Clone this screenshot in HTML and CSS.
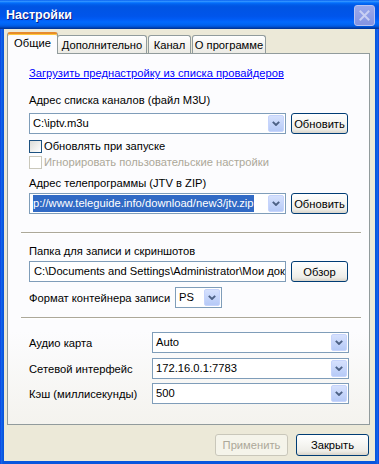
FILE: index.html
```html
<!DOCTYPE html>
<html lang="ru">
<head>
<meta charset="utf-8">
<title>Настройки</title>
<link rel="stylesheet" href="styles.css">
</head>
<body>
<div class="window">
  <div class="titlebar">
    <span class="title">Настройки</span>
    <span class="close"><svg width="11" height="11" viewBox="0 0 11 11"><path d="M1.5 1.5L9.5 9.5M9.5 1.5L1.5 9.5" stroke="#C8CFF3" stroke-width="2" stroke-linecap="square"/></svg></span>
  </div>
  <div class="client">
    <div class="tabs">
      <div class="tab active">Общие</div>
      <div class="tab t-dop">Дополнительно</div>
      <div class="tab t-kanal">Канал</div>
      <div class="tab t-about">О программе</div>
    </div>
    <div class="panel">
      <a class="link">Загрузить преднастройку из списка провайдеров</a>
      <div class="label l1">Адрес списка каналов (файл M3U)</div>
      <div class="row r1">
        <div class="combo wide"><span class="val">C:\iptv.m3u</span><span class="drop"><svg width="8" height="5" viewBox="0 0 8 5"><path d="M0.8 0.8L4 4L7.2 0.8" fill="none" stroke="#4D6185" stroke-width="1.9"/></svg></span></div>
        <div class="btn side">Обновить</div>
      </div>
      <div class="check c1"><span class="box"></span>Обновлять при запуске</div>
      <div class="check c2 disabled"><span class="box"></span>Игнорировать пользовательские настройки</div>
      <div class="label l2">Адрес телепрограммы (JTV в ZIP)</div>
      <div class="row r2">
        <div class="combo wide"><span class="val tall"><span class="sel">p://www.teleguide.info/download/new3/jtv.zip</span></span><span class="drop"><svg width="8" height="5" viewBox="0 0 8 5"><path d="M0.8 0.8L4 4L7.2 0.8" fill="none" stroke="#4D6185" stroke-width="1.9"/></svg></span></div>
        <div class="btn side">Обновить</div>
      </div>
      <div class="sep s1"></div>
      <div class="label l3">Папка для записи и скриншотов</div>
      <div class="row r3">
        <div class="field wide">C:\Documents and Settings\Administrator\Мои док</div>
        <div class="btn side">Обзор</div>
      </div>
      <div class="row r4">
        <span class="flabel">Формат контейнера записи</span>
        <div class="combo small"><span class="val">PS</span><span class="drop"><svg width="8" height="5" viewBox="0 0 8 5"><path d="M0.8 0.8L4 4L7.2 0.8" fill="none" stroke="#4D6185" stroke-width="1.9"/></svg></span></div>
      </div>
      <div class="sep s2"></div>
      <div class="row r5">
        <span class="rlabel">Аудио карта</span>
        <div class="combo long"><span class="val">Auto</span><span class="drop"><svg width="8" height="5" viewBox="0 0 8 5"><path d="M0.8 0.8L4 4L7.2 0.8" fill="none" stroke="#4D6185" stroke-width="1.9"/></svg></span></div>
      </div>
      <div class="row r6">
        <span class="rlabel">Сетевой интерфейс</span>
        <div class="combo long"><span class="val">172.16.0.1:7783</span><span class="drop"><svg width="8" height="5" viewBox="0 0 8 5"><path d="M0.8 0.8L4 4L7.2 0.8" fill="none" stroke="#4D6185" stroke-width="1.9"/></svg></span></div>
      </div>
      <div class="row r7">
        <span class="rlabel">Кэш (миллисекунды)</span>
        <div class="combo long"><span class="val">500</span><span class="drop"><svg width="8" height="5" viewBox="0 0 8 5"><path d="M0.8 0.8L4 4L7.2 0.8" fill="none" stroke="#4D6185" stroke-width="1.9"/></svg></span></div>
      </div>
    </div>
    <div class="footer">
      <div class="btn foot disabled">Применить</div>
      <div class="btn foot">Закрыть</div>
    </div>
  </div>
</div>
</body>
</html>
```

FILE: styles.css
```css
body {
  margin: 0;
  width: 379px;
  height: 464px;
  overflow: hidden;
  font-family: "Liberation Sans", Arial, sans-serif;
  font-size: 11.2px;
  color: #000;
}

.window {
  width: 379px;
  height: 464px;
  display: flex;
  flex-direction: column;
  background: linear-gradient(90deg, #0831D9 0, #166AEE 1px, #0855DD 3px, #0855DD 376px, #166AEE 378px, #0831D9 379px);
}

.titlebar {
  height: 29px;
  flex: none;
  display: flex;
  align-items: center;
  justify-content: space-between;
  padding: 0 4px 0 6px;
  background: linear-gradient(#0058EE 0%, #3593FF 4%, #288EFF 6%, #127DFF 8%, #036FFC 10%, #0262EE 14%, #0057E5 20%, #0054E3 24%, #0055EB 56%, #005BF5 66%, #026AFE 76%, #0062EF 86%, #0052D6 92%, #0040AB 96%, #003092 100%);
}

.title {
  color: #fff;
  font-weight: bold;
  font-size: 12.5px;
  text-shadow: 1px 1px #0A1883;
}

.close {
  width: 21px;
  height: 21px;
  margin-top: 2px;
  box-sizing: border-box;
  border: 1px solid #B9C3F1;
  border-radius: 3px;
  background: linear-gradient(#9AA8EB, #8494E2);
  display: flex;
  align-items: center;
  justify-content: center;
}

.client {
  flex: 1;
  margin: 0 4px 3px;
  background: #ECE9D8;
  display: flex;
  flex-direction: column;
}

.tabs {
  height: 24px;
  flex: none;
  display: flex;
  align-items: flex-end;
  padding-left: 3px;
}

.tab {
  box-sizing: border-box;
  height: 18px;
  border: 1px solid #919B9C;
  border-bottom: none;
  border-radius: 3px 3px 0 0;
  background: linear-gradient(#FFFFFF, #F6F5F1 45%, #ECEBE5);
  display: flex;
  align-items: center;
  justify-content: center;
}

.tab.active {
  width: 51px;
  height: 22px;
  margin-bottom: -1px;
  border-top: 2px solid #E68B2C;
  box-shadow: inset 0 1px 0 #FFC73C;
  background: #FCFCFE;
  padding-bottom: 2px;
  position: relative;
  z-index: 1;
}

.t-dop { width: 90px; margin-left: -1px; }
.t-kanal { width: 43px; margin-left: 1px; }
.t-about { width: 74px; margin-left: 1px; }

.panel {
  flex: none;
  box-sizing: border-box;
  width: 363px;
  height: 372px;
  margin-left: 3px;
  border: 1px solid #919B9C;
  background: linear-gradient(#FCFCFE 0%, #FCFCFE 75%, #F4F3EE 100%);
  padding: 0 8px 0 21px;
  display: flex;
  flex-direction: column;
}

.link {
  margin-top: 13px;
  line-height: 13px;
  color: #0000FF;
  text-decoration: underline;
}

.label { line-height: 13px; }
.l1 { margin-top: 14px; }
.l2 { margin-top: 8px; }
.l3 { margin-top: 11px; }

.row {
  display: flex;
  align-items: center;
  height: 21px;
  flex: none;
}

.r1 { margin-top: 6px; }
.r2 { margin-top: 3px; }
.r3 { margin-top: 3px; }
.r4 { margin-top: 5px; }
.r5 { margin-top: 13px; }
.r6 { margin-top: 5px; }
.r7 { margin-top: 4px; }

.check {
  display: flex;
  align-items: center;
  height: 13px;
  line-height: 13px;
}

.c1 { margin-top: 6px; }
.c2 { margin-top: 3px; }

.box {
  width: 13px;
  height: 13px;
  box-sizing: border-box;
  border: 1px solid #1C5180;
  background: linear-gradient(135deg, #DCDCD7, #FFFFFF);
  margin-right: 2px;
  flex: none;
}

.check.disabled { color: #ACA899; }
.check.disabled .box {
  border-color: #CAC8BB;
  background: #FFFFFF;
}

.sep {
  height: 0;
  border-top: 1px solid #ACA899;
  border-bottom: 1px solid #FFFFFF;
  margin-left: -8px;
  flex: none;
}

.s1 { margin-top: 18px; }
.s2 { margin-top: 9px; }

.combo {
  box-sizing: border-box;
  height: 21px;
  border: 1px solid #7F9DB9;
  background: #FFFFFF;
  display: flex;
  align-items: center;
  padding: 1px;
}

.combo.wide, .field.wide { width: 257px; }
.combo.small { width: 47px; }
.combo.long { width: 197px; }

.val {
  flex: 1;
  min-width: 0;
  padding-left: 2px;
  white-space: nowrap;
  overflow: hidden;
  line-height: 13px;
}

.val.tall { line-height: 17px; height: 17px; }

.sel {
  background: #316AC5;
  color: #FFFFFF;
  display: inline-block;
  height: 17px;
}

.drop {
  flex: none;
  width: 16px;
  height: 17px;
  box-sizing: border-box;
  border: 1px solid #C6D4FC;
  border-radius: 2px;
  background: linear-gradient(#D6E1FD, #B6CAF7);
  display: flex;
  align-items: center;
  justify-content: center;
}

.field {
  box-sizing: border-box;
  height: 21px;
  border: 1px solid #7F9DB9;
  background: #FFFFFF;
  padding-left: 4px;
  line-height: 19px;
  white-space: nowrap;
  overflow: hidden;
}

.flabel { width: 146px; flex: none; }
.rlabel { width: 123px; flex: none; }

.btn {
  box-sizing: border-box;
  border: 1px solid #003C74;
  border-radius: 3px;
  background: linear-gradient(#FFFFFF 0%, #F7F7F4 40%, #EEEDE8 80%, #D9D4CA 100%);
  display: flex;
  align-items: center;
  justify-content: center;
  flex: none;
}

.btn.side {
  width: 57px;
  height: 21px;
  margin-left: 5px;
}

.footer {
  display: flex;
  justify-content: flex-end;
  gap: 8px;
  padding-right: 6px;
  margin-top: 9px;
}

.btn.foot {
  width: 73px;
  height: 22px;
}

.btn.disabled {
  border-color: #C9C7BA;
  background: #F5F4EA;
  color: #ACA899;
}
```
